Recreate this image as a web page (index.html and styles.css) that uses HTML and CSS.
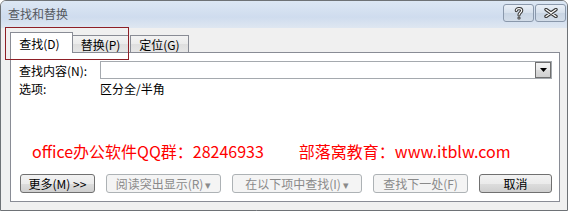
FILE: index.html
```html
<!DOCTYPE html>
<html lang="zh-CN">
<head>
<meta charset="utf-8">
<title>查找和替换</title>
<link rel="stylesheet" href="styles.css">
</head>
<body>
<div class="window">
  <div class="titlebar">
    <span class="title">查找和替换</span>
    <div class="caption-btns">
      <div class="cap">
        <svg width="10" height="13" viewBox="0 0 10 13">
          <path d="M2.3 3.6 C2.3 0.9 7.7 0.9 7.7 3.6 C7.7 5.6 5 5.4 5 8" fill="none" stroke="#3a3a3a" stroke-width="3.2" stroke-linecap="round"/>
          <circle cx="5" cy="11" r="1.6" fill="#3a3a3a"/>
          <path d="M2.3 3.6 C2.3 0.9 7.7 0.9 7.7 3.6 C7.7 5.6 5 5.4 5 8" fill="none" stroke="#fff" stroke-width="1.1" stroke-linecap="round"/>
          <circle cx="5" cy="11" r="0.6" fill="#fff"/>
        </svg>
      </div>
      <div class="cap">
        <svg width="14" height="10" viewBox="0 0 14 10">
          <path d="M2 1.5 L12 8.5 M12 1.5 L2 8.5" fill="none" stroke="#3a3a3a" stroke-width="3.4" stroke-linecap="round"/>
          <path d="M2 1.5 L12 8.5 M12 1.5 L2 8.5" fill="none" stroke="#fff" stroke-width="1.2" stroke-linecap="round"/>
        </svg>
      </div>
    </div>
  </div>
  <div class="body">
    <div class="tabs">
      <div class="tab active">查找(D)</div>
      <div class="tab tab-replace">替换(P)</div>
      <div class="tab tab-goto">定位(G)</div>
    </div>
    <div class="panel">
      <div class="row find-row">
        <span class="label">查找内容(N):</span>
        <div class="combo">
          <div class="combo-btn">
            <svg width="7" height="4" viewBox="0 0 7 4"><path d="M0 0 H7 L3.5 4 Z" fill="#000"/></svg>
          </div>
        </div>
      </div>
      <div class="row opt-row">
        <span class="label">选项:</span>
        <span>区分全/半角</span>
      </div>
      <div class="promo">
        <span>office办公软件QQ群：28246933</span>
        <span>部落窝教育：www.itblw.com</span>
      </div>
      <div class="buttons">
        <div class="btn btn-more">更多(M) &gt;&gt;</div>
        <div class="btn disabled btn-read">阅读突出显示(R)<span class="caret">▾</span></div>
        <div class="btn disabled btn-in">在以下项中查找(I)<span class="caret">▾</span></div>
        <div class="btn disabled btn-next">查找下一处(F)</div>
        <div class="btn btn-cancel">取消</div>
      </div>
    </div>
  </div>
  <div class="highlight"></div>
</div>
</body>
</html>
```
FILE: styles.css
```css
* { box-sizing: border-box; }
html, body { margin: 0; padding: 0; background: #ffffff; }
body {
  font-family: "Noto Sans CJK SC", "Liberation Sans", sans-serif;
  font-size: 12px;
  color: #000;
  width: 573px;
  height: 213px;
  overflow: hidden;
}
.window {
  position: relative;
  width: 568px;
  height: 211px;
  border: 1px solid #6e7276;
  border-radius: 6px 6px 0 0;
  background: #f0f0f0;
  display: flex;
  flex-direction: column;
}
.titlebar {
  height: 27px;
  flex: none;
  display: flex;
  align-items: flex-start;
  justify-content: space-between;
  padding: 0 1px 0 7px;
  border-radius: 5px 5px 0 0;
  background: linear-gradient(#dce7f4 0%, #cfdcee 60%, #dfe7f1 100%);
}
.title {
  line-height: 26px;
  color: #55595f;
  font-size: 12px;
}
.caption-btns {
  display: flex;
  gap: 1px;
  margin-top: 3px;
}
.cap {
  width: 31px;
  height: 18px;
  border: 1px solid #8a98ab;
  border-radius: 3px;
  background: linear-gradient(#e9eff7 0%, #d6e0ec 50%, #c9d5e4 51%, #d3dde9 100%);
  display: flex;
  align-items: center;
  justify-content: center;
}
.body {
  flex: 1;
  display: flex;
  flex-direction: column;
  padding: 0 7px 8px 9px;
}
.tabs {
  height: 24px;
  display: flex;
  align-items: flex-end;
  flex: none;
}
.tab {
  height: 17px;
  border: 1px solid #898c95;
  border-bottom: none;
  background: linear-gradient(#f3f3f3 0%, #ebebeb 50%, #dedede 51%, #e6e6e6 100%);
  display: flex;
  align-items: center;
  justify-content: center;
  line-height: 14px;
  padding-top: 1px;
}
.tab.active {
  width: 63px;
  height: 21px;
  margin-bottom: -1px;
  background: #ffffff;
  position: relative;
  z-index: 1;
  padding-right: 4px;
}
.tab-replace { width: 56px; border-left: none; }
.tab-goto { width: 59px; margin-left: 1px; }
.panel {
  flex: 1;
  border: 1px solid #898c95;
  background: #ffffff;
  display: flex;
  flex-direction: column;
  padding: 8px 7px 8px 8px;
}
.row {
  display: flex;
  align-items: center;
}
.label {
  width: 81px;
  flex: none;
}
.find-row { height: 18px; }
.opt-row { height: 14px; margin-top: 3px; line-height: 14px; }
.combo {
  width: 452px;
  height: 18px;
  border: 1px solid #a5a9ae;
  display: flex;
  justify-content: flex-end;
}
.combo-btn {
  width: 16px;
  height: 16px;
  border: 1px solid #707070;
  background: linear-gradient(#f4f4f4 0%, #e9e9e9 50%, #dcdcdc 51%, #d0d0d0 100%);
  display: flex;
  align-items: center;
  justify-content: center;
}
.promo {
  margin-top: 44px;
  height: 22px;
  line-height: 22px;
  display: flex;
  gap: 35px;
  padding-left: 13px;
  color: #ff0000;
  font-size: 16px;
  white-space: nowrap;
}
.buttons {
  margin-top: 12px;
  display: flex;
  gap: 11px;
  padding-left: 1px;
}
.btn {
  height: 19px;
  border: 1px solid #707070;
  border-radius: 3px;
  background: linear-gradient(#f2f2f2 0%, #ebebeb 50%, #dddddd 51%, #cfcfcf 100%);
  display: flex;
  align-items: center;
  justify-content: center;
  line-height: 14px;
  white-space: nowrap;
}
.btn.disabled {
  border-color: #adb2b5;
  background: #f4f4f4;
  color: #8a8a8a;
}
.caret { margin-left: 2px; font-size: 11px; }
.btn-more { width: 75px; }
.btn-read { width: 115px; }
.btn-in { width: 130px; }
.btn-next { width: 95px; }
.btn-cancel { width: 73px; }
.highlight {
  position: absolute;
  left: 4px;
  top: 26px;
  width: 124px;
  height: 33px;
  border: 1.5px solid #8e1f26;
  z-index: 2;
  pointer-events: none;
}
```
